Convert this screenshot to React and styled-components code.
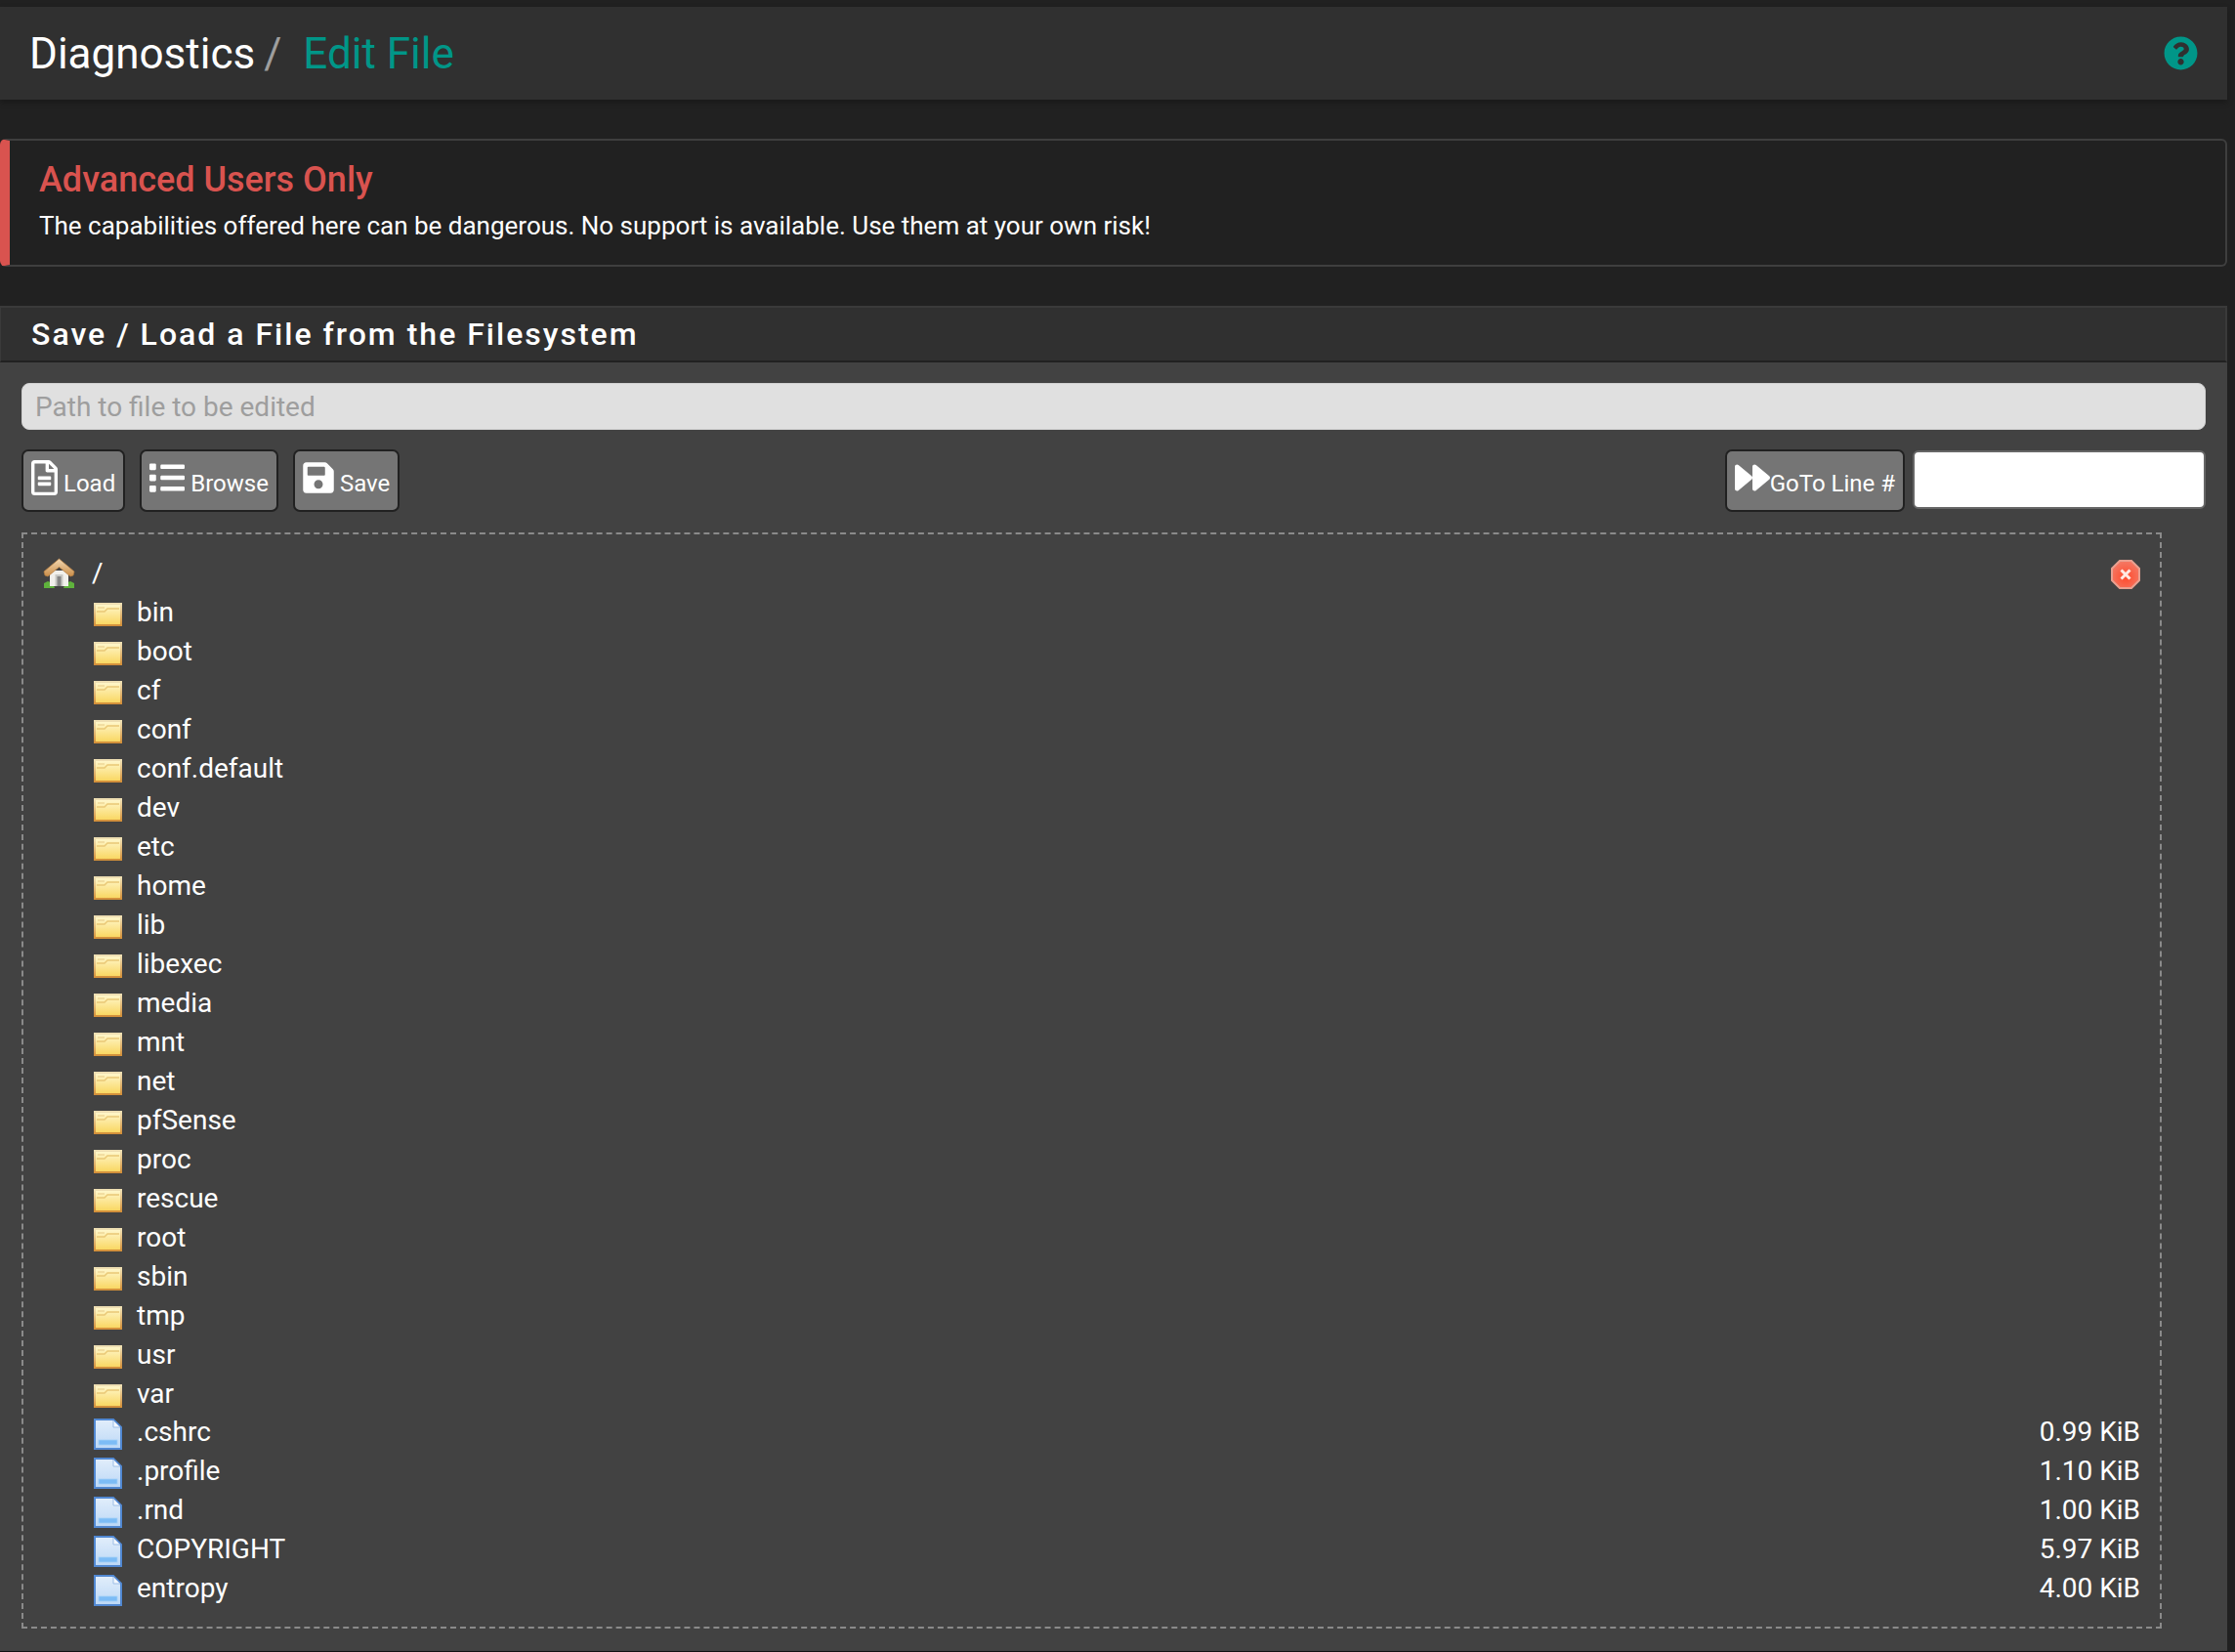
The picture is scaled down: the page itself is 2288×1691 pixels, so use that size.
import React from 'react'
import styled, { createGlobalStyle } from 'styled-components'
import { FaRegFileAlt, FaList, FaSave, FaForward, FaQuestionCircle } from 'react-icons/fa'

const TEAL = '#009688'

const folders = ['bin', 'boot', 'cf', 'conf', 'conf.default', 'dev', 'etc', 'home', 'lib', 'libexec', 'media', 'mnt', 'net', 'pfSense', 'proc', 'rescue', 'root', 'sbin', 'tmp', 'usr', 'var']
const files = [
  { name: '.cshrc', size: '0.99 KiB' },
  { name: '.profile', size: '1.10 KiB' },
  { name: '.rnd', size: '1.00 KiB' },
  { name: 'COPYRIGHT', size: '5.97 KiB' },
  { name: 'entropy', size: '4.00 KiB' },
]

const GlobalStyle = createGlobalStyle`
  html, body {
    margin: 0;
    height: 1691px;
    overflow: hidden;
    background: #212121;
  }
  * { box-sizing: border-box; }
`

const Page = styled.div`
  height: 1691px;
  padding: 7px 8px 0 0;
  font-family: Roboto, "Liberation Sans", sans-serif;
  color: #fff;
`

const Header = styled.header`
  height: 95px;
  background: #303030;
  box-shadow: 0 3px 6px rgba(0, 0, 0, 0.25);
  display: flex;
  align-items: center;
  justify-content: space-between;
  padding: 0 30px 0 30px;
`

const Crumbs = styled.div`
  display: flex;
  align-items: baseline;
  font-size: 44px;
  line-height: 60px;
`

const Slash = styled.span`
  color: #9e9e9e;
  margin: 0 22px 0 9px;
`

const Current = styled.span`
  color: ${TEAL};
`

const HelpIcon = styled(FaQuestionCircle)`
  color: ${TEAL};
  font-size: 35px;
  display: block;
`

const Alert = styled.section`
  margin-top: 40px;
  height: 131px;
  background: #212121;
  border: 2px solid #3f3f3f;
  border-left: 10px solid #d9534f;
  border-radius: 6px;
  padding: 17px 0 0 30px;
`

const AlertTitle = styled.h4`
  margin: 0;
  font-size: 36px;
  line-height: 46px;
  font-weight: 500;
  color: #d9534f;
`

const AlertText = styled.p`
  margin: 5px 0 0;
  font-size: 26px;
  line-height: 38px;
`

const Panel = styled.section`
  margin-top: 40px;
  height: 1378px;
  display: flex;
  flex-direction: column;
  background: #424242;
  border-bottom: 1px solid #111;
`

const PanelHeading = styled.h2`
  margin: 0;
  height: 58px;
  background: #303030;
  border: 2px solid #3a3a3a;
  border-bottom: 2px solid #212121;
  border-left-width: 1px;
  padding-left: 31px;
  font-size: 32px;
  line-height: 54px;
  font-weight: 500;
  letter-spacing: 2px;
`

const PanelBody = styled.div`
  padding: 21px 22px 0;
`

const PathInput = styled.input`
  display: block;
  width: 100%;
  height: 48px;
  background: #e0e0e0;
  border: 1px solid #d0d0d0;
  border-radius: 8px;
  padding: 0 13px;
  font: 28px Roboto, sans-serif;
  color: #333;
  &::placeholder { color: #9e9e9e; opacity: 1; }
`

const Toolbar = styled.div`
  display: flex;
  justify-content: space-between;
  margin-top: 20px;
`

const ButtonGroup = styled.div`
  display: flex;
  gap: ${p => p.$gap}px;
`

const Button = styled.button`
  height: 64px;
  display: flex;
  align-items: center;
  gap: ${p => p.$gap ?? 6}px;
  padding: 0 8px;
  background: #757575;
  border: 2px solid #212121;
  border-radius: 7px;
  color: #fff;
  font: 24px Roboto, sans-serif;
  svg { height: 36px; width: ${p => p.$icon}px; margin-top: -6px; flex: none; }
  span { margin-top: 6px; }
`

const LineInput = styled.input`
  width: 300px;
  height: 60px;
  margin-top: 1px;
  background: #fff;
  border: 2px solid #666;
  border-radius: 6px;
`

const Tree = styled.div`
  margin-top: 21px;
  width: 2191px;
  height: 1122px;
  border: 2px dashed #8a8a8a;
  padding: 19px 20px 0 20px;
`

const Row = styled.div`
  height: ${p => p.$height ?? 40}px;
  display: flex;
  align-items: center;
  font-size: 28px;
  color: #fff;
  padding-left: ${p => (p.$root ? 0 : 52)}px;
`

const IconSlot = styled.span`
  width: ${p => (p.$root ? 50 : 44)}px;
  flex: none;
  display: flex;
  margin-top: ${p => p.$drop ?? 0}px;
  svg { display: block; }
`

const CloseSlot = styled.span`
  display: flex;
  margin-top: 3px;
`

const Name = styled.span`
  flex: 1;
`

const Size = styled.span`
  flex: none;
`

const HomeIcon = () => (
  <svg width="33" height="31" viewBox="0 0 33 31">
    <defs>
      <linearGradient id="roof" x1="0" y1="0" x2="0" y2="1">
        <stop offset="0" stopColor="#f3d9b4" />
        <stop offset="1" stopColor="#c98d48" />
      </linearGradient>
    </defs>
    <path d="M1 31v-5l4-2 5 2 2 5zM32 31v-5l-4-2-5 2-2 5z" fill="#5fb23c" />
    <path d="M7 13h19v16H7z" fill="#f1f0ec" />
    <path d="M12.5 17h8v12h-8z" fill="#c9c9c5" />
    <path d="M14.5 19h4v10h-4z" fill="#858585" />
    <path d="M16.5 1 32 14l-1 4-3 1-11.500-9.500L5 19l-3-1-1-4z" fill="url(#roof)" stroke="#b98040" strokeWidth="0.7" />
  </svg>
)

const FolderIcon = () => (
  <svg width="29" height="24" viewBox="0 0 29 24">
    <defs>
      <linearGradient id="folderFill" x1="0" y1="0" x2="0" y2="1">
        <stop offset="0" stopColor="#fff8cf" />
        <stop offset="1" stopColor="#f9d65e" />
      </linearGradient>
      <linearGradient id="folderEdge" x1="0" y1="0" x2="0" y2="1">
        <stop offset="0" stopColor="#efe0b4" />
        <stop offset="1" stopColor="#d3903a" />
      </linearGradient>
    </defs>
    <rect x="1" y="1" width="27" height="22" fill="url(#folderFill)" stroke="url(#folderEdge)" strokeWidth="2" />
    <path d="M3 9h8l3-3h12" fill="none" stroke="#e9c877" strokeWidth="1.4" />
    <path d="M4 5h7" fill="none" stroke="#e9d08f" strokeWidth="1.2" />
  </svg>
)

const FileIcon = () => (
  <svg width="29" height="32" viewBox="0 0 29 32">
    <defs>
      <linearGradient id="sheet" x1="0" y1="0" x2="0" y2="1">
        <stop offset="0" stopColor="#e2eefb" />
        <stop offset="1" stopColor="#bcd8f6" />
      </linearGradient>
    </defs>
    <path d="M1 1h19l8 8v22H1z" fill="url(#sheet)" stroke="#5188d2" strokeWidth="2" />
    <path d="M20 2v7h7" fill="#f4f8fd" stroke="#9cbde6" strokeWidth="1" />
    <rect x="5" y="22" width="19" height="5" fill="#7cbcf6" stroke="#a4d0f8" strokeWidth="0.8" />
  </svg>
)

const CloseIcon = () => (
  <svg width="30" height="30" viewBox="0 0 30 30">
    <defs>
      <radialGradient id="stop" cx="0.5" cy="0.6" r="0.6">
        <stop offset="0" stopColor="#ff4a2c" />
        <stop offset="1" stopColor="#f47a66" />
      </radialGradient>
    </defs>
    <path d="M9 1h12l8 8v12l-8 8H9l-8-8V9z" fill="url(#stop)" stroke="#e9a090" strokeWidth="2" />
    <path d="M10.500 10.500l9 9M19.500 10.500l-9 9" stroke="#ffe9e4" strokeWidth="3" />
  </svg>
)

export default function App() {
  return (
    <Page>
      <GlobalStyle />
      <Header>
        <Crumbs>
          <span>Diagnostics</span>
          <Slash>/</Slash>
          <Current>Edit File</Current>
        </Crumbs>
        <HelpIcon />
      </Header>

      <Alert>
        <AlertTitle>Advanced Users Only</AlertTitle>
        <AlertText>The capabilities offered here can be dangerous. No support is available. Use them at your own risk!</AlertText>
      </Alert>

      <Panel>
        <PanelHeading>Save / Load a File from the Filesystem</PanelHeading>
        <PanelBody>
          <PathInput placeholder="Path to file to be edited" />
          <Toolbar>
            <ButtonGroup $gap={15}>
              <Button $icon={27}><FaRegFileAlt /><span>Load</span></Button>
              <Button $icon={36}><FaList /><span>Browse</span></Button>
              <Button $icon={32}><FaSave /><span>Save</span></Button>
            </ButtonGroup>
            <ButtonGroup $gap={8}>
              <Button $icon={36} $gap={0}><FaForward /><span>GoTo Line #</span></Button>
              <LineInput />
            </ButtonGroup>
          </Toolbar>
          <Tree>
            <Row $root>
              <IconSlot $root><HomeIcon /></IconSlot>
              <Name>/</Name>
              <CloseSlot><CloseIcon /></CloseSlot>
            </Row>
            {folders.map(name => (
              <Row key={name}>
                <IconSlot $drop={5}><FolderIcon /></IconSlot>
                <Name>{name}</Name>
              </Row>
            ))}
            {files.map(file => (
              <Row key={file.name} $height={39.9}>
                <IconSlot $drop={4}><FileIcon /></IconSlot>
                <Name>{file.name}</Name>
                <Size>{file.size}</Size>
              </Row>
            ))}
          </Tree>
        </PanelBody>
      </Panel>
    </Page>
  )
}
